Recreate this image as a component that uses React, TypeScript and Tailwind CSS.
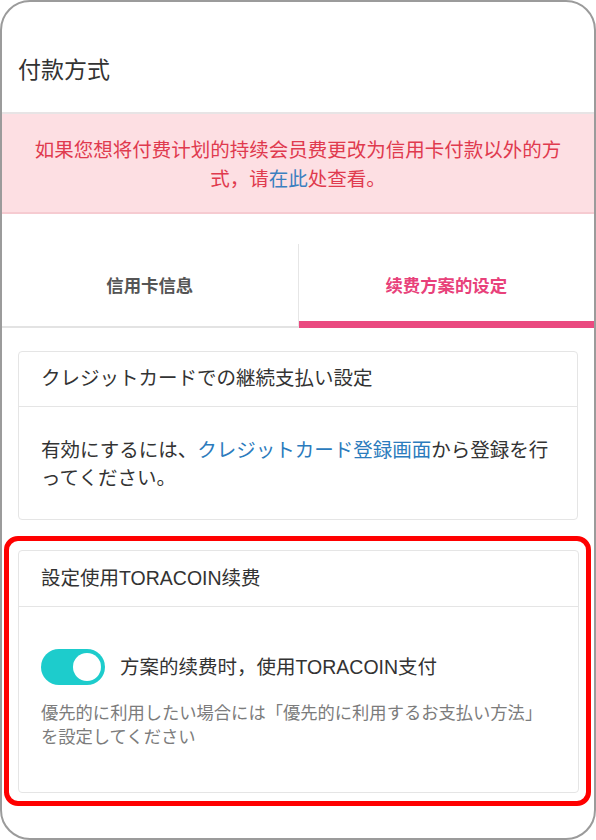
import React, { useState } from 'react';

const SC = "font-['Liberation_Sans','Noto_Sans_CJK_SC',sans-serif]";
const JP = "font-['Liberation_Sans','Noto_Sans_CJK_JP',sans-serif]";

function Toggle({ on, onChange }: { on: boolean; onChange: () => void }) {
  return (
    <button
      type="button"
      onClick={onChange}
      aria-pressed={on}
      className={`flex h-[36px] w-[64px] shrink-0 items-center rounded-full px-[4px] transition-colors ${
        on ? 'justify-end bg-[#1dcccc]' : 'justify-start bg-[#d6d6d6]'
      }`}
    >
      <span className="h-[28px] w-[28px] rounded-full bg-white" />
    </button>
  );
}

export default function App() {
  const [tab, setTab] = useState<'card' | 'plan'>('plan');
  const [useCoin, setUseCoin] = useState(true);

  return (
    <div className="h-[840px] w-[596px] bg-white">
      <div className={`flex h-[840px] w-[596px] flex-col overflow-hidden rounded-[30px] border-2 border-[#9b9b9b] bg-white [text-spacing-trim:space-all] ${SC}`}>
        {/* page title */}
        <div className="border-b-2 border-[#e7e4e5] px-4 pb-[26px] pt-[52px]">
          <h1 className="text-[23px] leading-[32px] text-[#333]">付款方式</h1>
        </div>

        {/* notice banner */}
        <div className="border-b-2 border-[#f6cbd1] bg-[#fddfe3] px-[30px] pb-[18px] pt-[22px] text-center text-[19.5px] leading-[29px] text-[#e03a4e]">
          如果您想将付费计划的持续会员费更改为信用卡付款以外的方式，请<span className="text-[#3b7fc0]">在此</span>处查看。
        </div>

        {/* tabs */}
        <div className="mt-[30px] flex">
          <button
            onClick={() => setTab('card')}
            className={`flex h-[84px] flex-1 items-center justify-center border-r border-[#e6e6e6] text-[17.4px] font-bold ${
              tab === 'card' ? 'text-[#e8417a] shadow-[inset_0_-7px_0_#ea4a80]' : 'text-[#555] shadow-[inset_0_-2px_0_#e3e3e3]'
            }`}
          >
            信用卡信息
          </button>
          <button
            onClick={() => setTab('plan')}
            className={`flex h-[84px] flex-1 items-center justify-center text-[17.4px] font-bold ${
              tab === 'plan' ? 'text-[#e8417a] shadow-[inset_0_-7px_0_#ea4a80]' : 'text-[#555] shadow-[inset_0_-2px_0_#e3e3e3]'
            }`}
          >
            续费方案的设定
          </button>
        </div>

        {/* credit card recurring */}
        <div className={`mx-4 mt-[23px] rounded-[4px] border border-[#e5e5e5] ${JP}`}>
          <div className="flex h-[55px] items-center border-b border-[#e5e5e5] px-[22px] text-[19.5px] text-[#333]">
            クレジットカードでの継続支払い設定
          </div>
          <p className="px-[22px] pb-[27px] pt-[29px] text-[19.5px] leading-[28px] text-[#333] [line-break:loose]">
            有効にするには、<span className="text-[#2b7bbd]">クレジットカード登録画面</span>から登録を行ってください。
          </p>
        </div>

        {/* highlighted TORACOIN block */}
        <div className="ml-[2px] mr-[3px] mt-[16px] rounded-[14px] border-[5px] border-[#ff0000] pb-[8px] pl-[9px] pr-[7px] pt-[9px]">
          <div className="rounded-[4px] border border-[#e5e5e5]">
            <div className="flex h-[56px] items-center border-b border-[#e5e5e5] px-[22px] text-[19.5px] text-[#333]">
              設定使用TORACOIN续费
            </div>
            <div className="px-[22px] pb-[43px] pt-[42px]">
              <div className="flex items-center gap-[15px]">
                <Toggle on={useCoin} onChange={() => setUseCoin(!useCoin)} />
                <span className="text-[19.5px] leading-[28px] text-[#333]">方案的续费时，使用TORACOIN支付</span>
              </div>
              <p className={`mt-[16px] pr-[10px] text-[17.3px] leading-[24px] text-[#7c7c7c] ${JP}`}>
                優先的に利用したい場合には「優先的に利用するお支払い方法」を設定してください
              </p>
            </div>
          </div>
        </div>
      </div>
    </div>
  );
}
